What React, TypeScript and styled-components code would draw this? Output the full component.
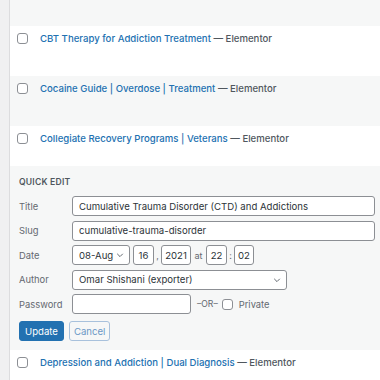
import styled, { createGlobalStyle } from "styled-components";

const GlobalStyle = createGlobalStyle`
  html, body {
    margin: 0;
    padding: 0;
    background: #fff;
  }
  body {
    font-family: Inter, "Liberation Sans", Arial, sans-serif;
    font-size: 9.6px;
    color: #3c434a;
  }
`;

interface Post {
  title: string;
}

const before: Post[] = [
  { title: "CBT Therapy for Addiction Treatment" },
  { title: "Cocaine Guide | Overdose | Treatment" },
  { title: "Collegiate Recovery Programs | Veterans" },
];

const after: Post[] = [{ title: "Depression and Addiction | Dual Diagnosis" }];

export default function App() {
  return (
    <>
      <GlobalStyle />
      <S.Page>
        <S.Strip />
        <S.Table>
          <S.Row $alt $height={26} />
          {before.map((post, i) => (
            <PostRow key={post.title} post={post} alt={i % 2 === 1} height={i === 2 ? 40 : 50} />
          ))}
          <QuickEdit />
          <PostRow post={after[0]} alt={false} height={30} />
        </S.Table>
      </S.Page>
    </>
  );
}

function PostRow({ post, alt, height }: { post: Post; alt: boolean; height: number }) {
  return (
    <S.Row $alt={alt} $height={height}>
      <S.Check />
      <S.Title>
        <a href="#">{post.title}</a>
        <S.State> — Elementor</S.State>
      </S.Title>
    </S.Row>
  );
}

const Chevron = () => (
  <svg width="8" height="8" viewBox="0 0 10 10" fill="none">
    <path d="M1.5 3.5 L5 7 L8.5 3.5" stroke="#50575e" strokeWidth="1.1" />
  </svg>
);

function QuickEdit() {
  return (
    <S.Quick>
      <S.Heading>Quick Edit</S.Heading>
      <S.Fields>
        <S.Label>Title</S.Label>
        <S.Input $width="100%">Cumulative Trauma Disorder (CTD) and Addictions</S.Input>

        <S.Label>Slug</S.Label>
        <S.Input $width="100%">cumulative-trauma-disorder</S.Input>

        <S.Label>Date</S.Label>
        <S.Inline>
          <S.Select $width={58}>
            <span>08-Aug</span>
            <Chevron />
          </S.Select>
          <S.Input $width="21px" $center>16</S.Input>
          <S.Sep>,</S.Sep>
          <S.Input $width="30px" $center>2021</S.Input>
          <S.Sep $wide>at</S.Sep>
          <S.Input $width="21px" $center>22</S.Input>
          <S.Sep>:</S.Sep>
          <S.Input $width="20px" $center>02</S.Input>
        </S.Inline>

        <S.Label>Author</S.Label>
        <S.Inline>
          <S.Select $width={215}>
            <span>Omar Shishani (exporter)</span>
            <Chevron />
          </S.Select>
        </S.Inline>

        <S.Label>Password</S.Label>
        <S.Inline>
          <S.Input $width="119px" />
          <S.Or>–OR–</S.Or>
          <S.SmallCheck />
          <S.Private>Private</S.Private>
        </S.Inline>
      </S.Fields>
      <S.Buttons>
        <S.Button $primary>Update</S.Button>
        <S.Button>Cancel</S.Button>
      </S.Buttons>
    </S.Quick>
  );
}

const S = {
  Page: styled.div`
    display: flex;
    width: 380px;
    height: 380px;
    overflow: hidden;
  `,
  Strip: styled.div`
    width: 9px;
    flex: none;
    background: #f0f0f1;
    border-right: 1px solid #dcdcde;
  `,
  Table: styled.div`
    flex: 1;
    display: flex;
    flex-direction: column;
  `,
  Row: styled.div<{ $alt?: boolean; $height: number }>`
    flex: none;
    height: ${(p) => p.$height}px;
    box-sizing: border-box;
    background: ${(p) => (p.$alt ? "#f6f7f7" : "#fff")};
    display: flex;
    align-items: flex-start;
    padding: 7px 0 0 7px;
  `,
  Check: styled.span`
    width: 11px;
    height: 11px;
    box-sizing: border-box;
    border: 1px solid #8c8f94;
    border-radius: 3px;
    background: #fff;
    flex: none;
  `,
  Title: styled.div`
    margin-left: 12px;
    line-height: 11px;
    font-size: 9.6px;
    a {
      color: #2271b1;
      text-decoration: none;
      font-weight: 500;
    }
  `,
  State: styled.span`
    color: #50575e;
    font-weight: 500;
  `,
  Quick: styled.div`
    flex: none;
    height: 184px;
    box-sizing: border-box;
    background: #f6f7f7;
    padding: 10px 5px 0 9px;
  `,
  Heading: styled.div`
    font-size: 8.6px;
    font-weight: 600;
    text-transform: uppercase;
    color: #50575e;
    letter-spacing: 0.2px;
    line-height: 10px;
    padding-top: 1px;
  `,
  Fields: styled.div`
    display: grid;
    grid-template-columns: 53px 1fr;
    row-gap: 4.5px;
    align-items: center;
    margin-top: 9px;
  `,
  Label: styled.div`
    font-size: 9.4px;
    color: #646970;
  `,
  Inline: styled.div`
    display: flex;
    align-items: center;
  `,
  Input: styled.div<{ $width?: string; $center?: boolean }>`
    width: ${(p) => p.$width ?? "100%"};
    height: 20px;
    box-sizing: border-box;
    border: 1px solid #8c8f94;
    border-radius: 3px;
    background: #fff;
    padding: 0 ${(p) => (p.$center ? "0" : "6px")};
    display: flex;
    align-items: center;
    justify-content: ${(p) => (p.$center ? "center" : "flex-start")};
    font-size: 9.6px;
    color: #2c3338;
    white-space: nowrap;
    overflow: hidden;
  `,
  Select: styled.div<{ $width: number }>`
    width: ${(p) => p.$width}px;
    height: 20px;
    box-sizing: border-box;
    border: 1px solid #8c8f94;
    border-radius: 3px;
    background: #fff;
    padding: 0 5px 0 6px;
    display: flex;
    align-items: center;
    justify-content: space-between;
    font-size: 9.6px;
    color: #2c3338;
    margin-right: 3px;
  `,
  Sep: styled.span<{ $wide?: boolean }>`
    width: ${(p) => (p.$wide ? "15px" : "7px")};
    text-align: center;
    font-size: 9px;
    color: #646970;
    align-self: ${(p) => (p.$wide ? "center" : "flex-end")};
    padding-bottom: ${(p) => (p.$wide ? "0" : "4px")};
  `,
  Or: styled.span`
    font-size: 8.6px;
    color: #646970;
    margin: 0 4px 0 6px;
  `,
  SmallCheck: styled.span`
    width: 11px;
    height: 11px;
    box-sizing: border-box;
    border: 1px solid #8c8f94;
    border-radius: 3px;
    background: #fff;
  `,
  Private: styled.span`
    font-size: 9.4px;
    color: #646970;
    margin-left: 6px;
  `,
  Buttons: styled.div`
    display: flex;
    gap: 5px;
    margin-top: 7px;
  `,
  Button: styled.button<{ $primary?: boolean }>`
    height: 20px;
    box-sizing: border-box;
    padding: 0 ${(p) => (p.$primary ? "5px" : "4px")};
    border-radius: 3px;
    font-family: inherit;
    font-size: 9.6px;
    border: 1px solid ${(p) => (p.$primary ? "#2271b1" : "#a8c1dc")};
    background: ${(p) => (p.$primary ? "#2271b1" : "#f6f7f7")};
    color: ${(p) => (p.$primary ? "#fff" : "#6b97c6")};
    cursor: pointer;
  `,
};
